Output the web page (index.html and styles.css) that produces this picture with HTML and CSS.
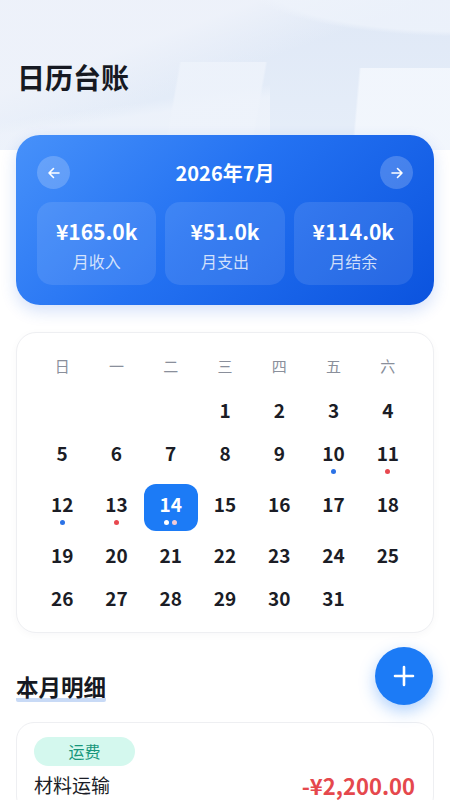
FILE: index.html
```html
<!DOCTYPE html>
<html lang="zh">
<head>
<meta charset="utf-8">
<title>日历台账</title>
<link rel="stylesheet" href="styles.css">
</head>
<body>
<div class="page">
  <h1 class="title">日历台账</h1>

  <section class="summary">
    <div class="month-nav">
      <button class="nav-btn" aria-label="上个月">
        <svg width="14" height="14" viewBox="0 0 14 14"><path d="M12 7H2M6.5 2.5L2 7l4.5 4.5" fill="none" stroke="#fff" stroke-width="1.6" stroke-linecap="round" stroke-linejoin="round"/></svg>
      </button>
      <div class="month">2026年7月</div>
      <button class="nav-btn" aria-label="下个月">
        <svg width="14" height="14" viewBox="0 0 14 14"><path d="M2 7h10M7.5 2.5L12 7l-4.5 4.5" fill="none" stroke="#fff" stroke-width="1.6" stroke-linecap="round" stroke-linejoin="round"/></svg>
      </button>
    </div>
    <div class="stats">
      <div class="stat"><div class="stat-value">¥165.0k</div><div class="stat-label">月收入</div></div>
      <div class="stat"><div class="stat-value">¥51.0k</div><div class="stat-label">月支出</div></div>
      <div class="stat"><div class="stat-value">¥114.0k</div><div class="stat-label">月结余</div></div>
    </div>
  </section>

  <section class="calendar">
    <div class="weekdays">
      <span>日</span><span>一</span><span>二</span><span>三</span><span>四</span><span>五</span><span>六</span>
    </div>
    <div class="days">
      <div class="day"></div><div class="day"></div><div class="day"></div>
      <div class="day"><span class="num">1</span></div>
      <div class="day"><span class="num">2</span></div>
      <div class="day"><span class="num">3</span></div>
      <div class="day"><span class="num">4</span></div>
      <div class="day"><span class="num">5</span></div>
      <div class="day"><span class="num">6</span></div>
      <div class="day"><span class="num">7</span></div>
      <div class="day"><span class="num">8</span></div>
      <div class="day"><span class="num">9</span></div>
      <div class="day"><span class="num">10</span><span class="dots"><i class="dot blue"></i></span></div>
      <div class="day"><span class="num">11</span><span class="dots"><i class="dot red"></i></span></div>
      <div class="day"><span class="num">12</span><span class="dots"><i class="dot blue"></i></span></div>
      <div class="day"><span class="num">13</span><span class="dots"><i class="dot red"></i></span></div>
      <div class="day selected"><span class="num">14</span><span class="dots"><i class="dot white"></i><i class="dot pink"></i></span></div>
      <div class="day"><span class="num">15</span></div>
      <div class="day"><span class="num">16</span></div>
      <div class="day"><span class="num">17</span></div>
      <div class="day"><span class="num">18</span></div>
      <div class="day"><span class="num">19</span></div>
      <div class="day"><span class="num">20</span></div>
      <div class="day"><span class="num">21</span></div>
      <div class="day"><span class="num">22</span></div>
      <div class="day"><span class="num">23</span></div>
      <div class="day"><span class="num">24</span></div>
      <div class="day"><span class="num">25</span></div>
      <div class="day"><span class="num">26</span></div>
      <div class="day"><span class="num">27</span></div>
      <div class="day"><span class="num">28</span></div>
      <div class="day"><span class="num">29</span></div>
      <div class="day"><span class="num">30</span></div>
      <div class="day"><span class="num">31</span></div>
    </div>
  </section>

  <section class="detail">
    <h2 class="section-title"><span class="section-text">本月明细</span></h2>
    <div class="entry">
      <span class="tag">运费</span>
      <div class="entry-row">
        <span class="entry-name">材料运输</span>
        <span class="entry-amount">-¥2,200.00</span>
      </div>
    </div>
  </section>

  <button class="fab" aria-label="新增">
    <svg width="22" height="22" viewBox="0 0 22 22"><path d="M11 2v18M2 11h18" stroke="#fff" stroke-width="2.6" stroke-linecap="round"/></svg>
  </button>
</div>
</body>
</html>
```

FILE: styles.css
```css
* { box-sizing: border-box; }

html, body {
  margin: 0;
  padding: 0;
  background: #ffffff;
}

body {
  font-family: "Noto Sans CJK SC", "Noto Sans", sans-serif;
  color: #1b1d26;
}

.page {
  position: relative;
  min-height: 800px;
  padding: 0 16px 40px;
  background:
    /* right lower sheet */
    linear-gradient(95deg, rgba(243,247,253,0) 0 78.5%, rgba(243,247,253,0.9) 79% 100%) 0 68px / 100% 82px no-repeat,
    /* middle lower sheet */
    linear-gradient(100deg, rgba(238,243,251,0) 0 38.5%, rgba(238,243,251,0.85) 39% 57%, rgba(238,243,251,0) 57.5%) 0 62px / 100% 88px no-repeat,
    /* top-right curved light area */
    radial-gradient(ellipse 260px 60px at 470px -15px, rgba(238,243,251,0.8) 0 78%, rgba(238,243,251,0) 86%) 0 0 / 100% 150px no-repeat,
    /* left diagonal light band */
    linear-gradient(160deg, rgba(238,242,250,0.95) 0 30%, rgba(238,242,250,0) 50%) 0 0 / 100% 150px no-repeat,
    linear-gradient(172deg, rgba(238,243,251,0) 0 65%, rgba(238,243,251,0.8) 72% 100%) 0 0 / 60% 150px no-repeat,
    linear-gradient(180deg, #dfe8f6 0%, #e6eef9 100%) 0 0 / 100% 150px no-repeat,
    #ffffff;
}

.title {
  margin: 0;
  padding-top: 57px;
  padding-left: 1px;
  font-size: 28px;
  line-height: 40px;
  font-weight: 700;
  color: #161922;
}

/* Summary card */
.summary {
  margin-top: 38px;
  padding: 21px 21px 20px;
  border-radius: 24px;
  background: linear-gradient(135deg, #4791fa 0%, #2472f2 45%, #0b53de 100%);
  box-shadow: 0 6px 16px rgba(20, 90, 220, 0.18);
  color: #fff;
}

.month-nav {
  display: flex;
  align-items: center;
  justify-content: space-between;
}

.nav-btn {
  width: 33px;
  height: 33px;
  border: none;
  border-radius: 50%;
  padding: 0;
  background: rgba(255, 255, 255, 0.2);
  display: flex;
  align-items: center;
  justify-content: center;
}

.month {
  font-size: 20px;
  font-weight: 700;
  line-height: 28px;
}

.stats {
  margin-top: 13px;
  display: grid;
  grid-template-columns: repeat(3, 1fr);
  gap: 9px;
}

.stat {
  height: 83px;
  border-radius: 15px;
  background: rgba(255, 255, 255, 0.1);
  padding-top: 16px;
  text-align: center;
}

.stat-value {
  font-size: 21px;
  font-weight: 700;
  line-height: 26px;
}

.stat-label {
  margin-top: 6px;
  font-size: 16px;
  line-height: 22px;
  color: rgba(255, 255, 255, 0.78);
}

/* Calendar */
.calendar {
  margin-top: 27px;
  padding: 22px 18px 15px;
  border: 1px solid #eeeff2;
  border-radius: 20px;
  background: #fff;
  box-shadow: 0 2px 8px rgba(20, 30, 60, 0.03);
}

.weekdays {
  display: grid;
  grid-template-columns: repeat(7, 1fr);
  text-align: center;
  font-size: 15px;
  line-height: 22px;
  color: #8a8f9b;
  margin-bottom: 13px;
}

.days {
  display: grid;
  grid-template-columns: repeat(7, 1fr);
  row-gap: 4px;
  align-items: start;
}

.day {
  min-height: 39px;
  padding: 6px 0;
  display: flex;
  flex-direction: column;
  align-items: center;
  border-radius: 12px;
}

.num {
  font-size: 19px;
  font-weight: 700;
  line-height: 27px;
  color: #1b1d26;
}

.dots {
  margin-top: 2px;
  height: 6px;
  display: flex;
  gap: 3px;
  align-items: center;
}

.dot {
  width: 5px;
  height: 5px;
  border-radius: 50%;
}

.dot.blue { background: #2b72e6; }
.dot.red { background: #e8484f; }
.dot.white { background: #ffffff; }
.dot.pink { background: #f2cbd6; }

.day.selected {
  background: #1c7bf6;
}

.day.selected .num { color: #ffffff; }

/* Detail */
.detail {
  margin-top: 38px;
}

.section-title {
  margin: 0;
  font-size: 22.5px;
  line-height: 30px;
  font-weight: 700;
  color: #161922;
}

.section-text {
  display: inline-block;
  padding-bottom: 1px;
  background: linear-gradient(#c8daf6, #c8daf6) left bottom / 100% 4px no-repeat;
  border-radius: 2px;
}

.entry {
  margin-top: 20px;
  padding: 14px 18px 14px 17px;
  border: 1px solid #eeeff2;
  border-radius: 18px;
  background: #fff;
}

.tag {
  display: inline-block;
  min-width: 101px;
  height: 29px;
  line-height: 29px;
  padding: 0 16px;
  border-radius: 15px;
  background: #d4f8ee;
  color: #17967b;
  font-size: 16px;
  text-align: center;
}

.entry-row {
  margin-top: 5px;
  display: flex;
  justify-content: space-between;
  align-items: center;
}

.entry-name {
  font-size: 19px;
  line-height: 26px;
  color: #1b1d26;
}

.entry-amount {
  font-size: 22px;
  line-height: 28px;
  font-weight: 700;
  color: #e5484d;
}

.fab {
  position: absolute;
  top: 647px;
  right: 17px;
  width: 58px;
  height: 58px;
  border: none;
  border-radius: 50%;
  padding: 0;
  background: #1c7bf6;
  box-shadow: 0 6px 16px rgba(28, 123, 246, 0.35);
  display: flex;
  align-items: center;
  justify-content: center;
}
```
